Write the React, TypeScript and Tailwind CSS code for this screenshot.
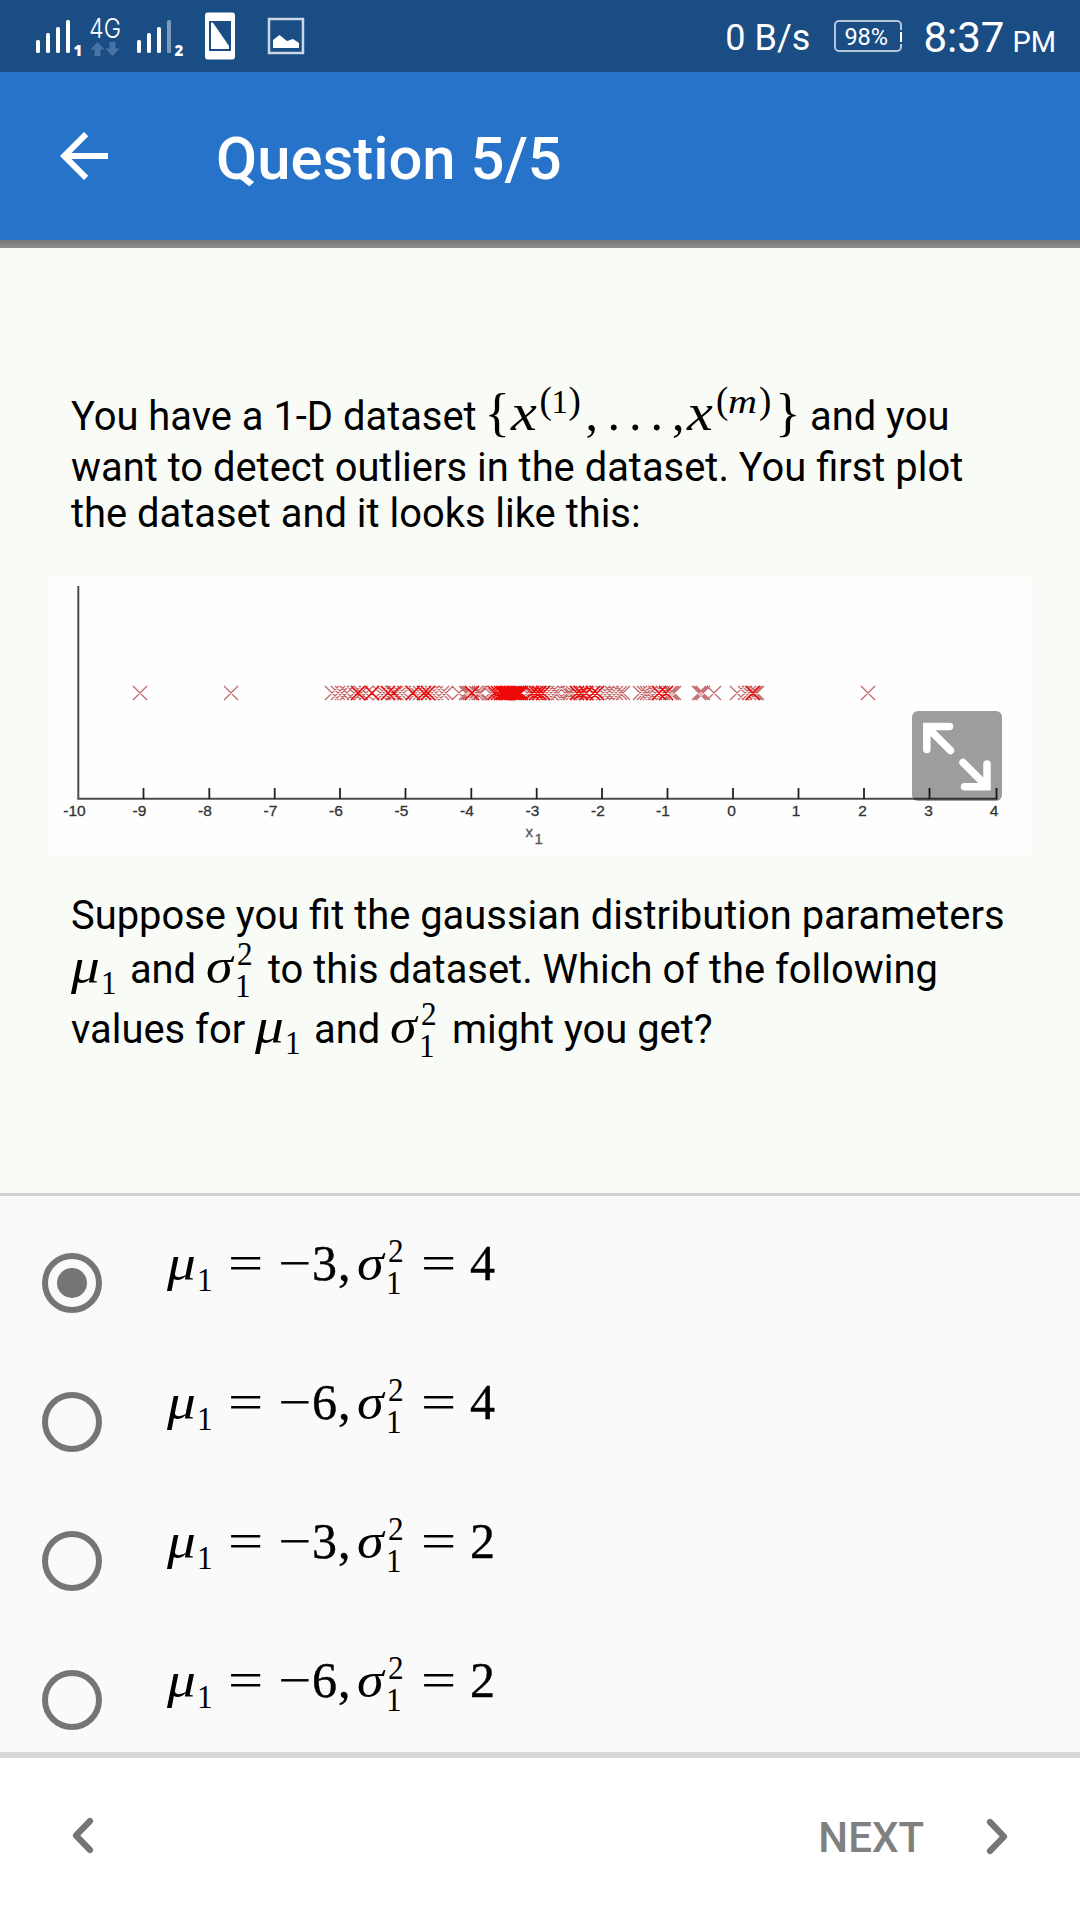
import React from "react";

type GlyphProps = { c: string; children: React.ReactNode };

/* A single math symbol in a slot of its own width; it never changes the height of its line. */
function G({ c, children }: GlyphProps) {
  return <span className={"inline-block leading-[0] whitespace-nowrap " + c}>{children}</span>;
}

function StatusBar() {
  return (
    <div className="flex h-[72px] items-center justify-between bg-[#1b4d85] text-white">
      <svg className="h-[72px] w-[320px]" viewBox="0 0 320 72" fill="#fff">
        <rect x="36" y="40" width="4" height="13" rx="1.5" />
        <rect x="46" y="33" width="4" height="20" rx="1.5" />
        <rect x="56" y="27" width="4" height="26" rx="1.5" />
        <rect x="66" y="20" width="4" height="33" rx="1.5" />
        <text x="73.5" y="56" fontFamily="Open Sans" fontWeight="800" fontSize="15">1</text>
        <text x="89" y="38" fontFamily="Inter" fontWeight="300" fontSize="27" textLength="32" lengthAdjust="spacingAndGlyphs">4G</text>
        <path d="M97.500 42 L104.500 49.500 H100.500 V56 H94.500 V49.500 H90.500Z" fill="#4774a5" />
        <path d="M112.500 56 L119.500 48.500 H115.500 V42 H109.500 V48.500 H105.500Z" fill="#4774a5" />
        <rect x="137" y="40" width="4" height="13" rx="1.5" />
        <rect x="147" y="33" width="4" height="20" rx="1.5" />
        <rect x="157" y="27" width="4" height="26" rx="1.5" />
        <rect x="167" y="20" width="4" height="33" rx="1.5" fill="#7f9bbc" />
        <text x="174.500" y="56" fontFamily="Open Sans" fontWeight="800" fontSize="15">2</text>
        <path fillRule="evenodd" d="M208 12.500h24a3 3 0 0 1 3 3v41a3 3 0 0 1-3 3h-24a3 3 0 0 1-3-3v-41a3 3 0 0 1 3-3ZM209 21v30h22V21Z" />
        <path d="M211 49V24q0-3 2.500-.5L229 46v3Z" />
        <rect x="269" y="19" width="34" height="34" fill="none" stroke="#c9d6e5" strokeWidth="2.500" />
        <path d="M273 48V40l6.500-5 7.500 6 6-2 6 4v5Z" />
      </svg>
      <div className="flex items-center pr-[24px] font-[Roboto]">
        <span className="mr-[24px] pt-[4px] text-[36px] leading-[68px]">0 B/s</span>
        <span className="relative mr-[21px] flex h-[32px] w-[68px] items-center rounded-[5px] border-2 border-[#b4c5da] pt-[3px] pl-[8px] text-[23.500px] leading-none">
          98%
          <span className="absolute -right-[2px] top-[8px] h-[14px] w-[2px] bg-[#1b4d85] py-[2px]">
            <span className="block h-[10px] w-[2px] bg-white" />
          </span>
        </span>
        <span className="flex items-baseline pt-[3px]">
          <span className="text-[42px] leading-[69px]">8:37</span>
          <span className="ml-[8px] text-[29px]">PM</span>
        </span>
      </div>
    </div>
  );
}

function AppBar() {
  return (
    <header className="flex h-[168px] items-center bg-[#2873ca] text-white">
      <svg className="ml-[48px] h-[72px] w-[72px]" viewBox="0 0 24 24" fill="#fff">
        <path d="M20 11H7.830l5.590-5.590L12 4l-8 8 8 8 1.410-1.410L7.830 13H20v-2z" />
      </svg>
      <h1 className="ml-[96px] pt-[7px] font-[Roboto] text-[59.800px] font-medium leading-none">Question 5/5</h1>
    </header>
  );
}

const light = [
  140, 231, 332, 338, 342, 347, 354, 358, 361, 366, 372, 380, 384, 388, 392, 396, 400, 404, 412, 416, 420, 424, 428, 432,
  436, 442, 446, 459, 466, 468, 470, 472, 476, 479, 481, 490, 493, 527, 530, 533, 537, 540, 543, 547, 551, 555, 558, 565,
  568, 570, 573, 577, 580, 583, 587, 593, 597, 603, 607, 612, 616, 620, 623, 640, 644, 647, 650, 655, 659, 663, 666, 670,
  672, 674, 699, 701, 703, 714, 737, 745, 749, 752, 755, 757, 868,
];
const strong = [
  358, 372, 388, 394, 413, 424, 428, 472, 495, 498, 501, 503, 505, 507, 509, 511, 513, 515, 517, 519, 521, 532, 536, 539,
  543, 577, 581, 586, 593, 597, 659, 666, 753,
];

const cross = (x: number) => `M${x - 7} 686l14 14m0-14l-14 14`;

const labels: [number, string][] = [
  [74.5, "-10"], [139.5, "-9"], [205, "-8"], [270.5, "-7"], [336, "-6"], [401.5, "-5"], [467, "-4"], [532.5, "-3"],
  [598, "-2"], [663, "-1"], [731.5, "0"], [796, "1"], [862.5, "2"], [928.5, "3"], [994, "4"],
];
const ticks = [143.5, 209.3, 274.7, 340, 405.5, 471.3, 536.7, 602, 667.5, 733, 798.5, 864, 929.5, 996.5];

function Chart() {
  return (
    <div className="relative ml-[49px] h-[278px] w-[982px] bg-[#fefefe]">
      <svg className="block h-[278px] w-[982px]" viewBox="49 577 982 278">
        <path d="M78.300 586V798.800H997.500" fill="none" stroke="#4d4d4d" strokeWidth="2" />
        {ticks.map((x) => (
          <path key={x} d={`M${x} 788v11`} stroke="#222" strokeWidth="1.800" />
        ))}
        <path d={light.map(cross).join("")} fill="none" stroke="#c4686a" strokeWidth="1.300" />
        <path d={strong.map(cross).join("")} fill="none" stroke="#ee0808" strokeWidth="1.500" />
        <g fontFamily="Liberation Sans" fontSize="15.500" fill="#333" stroke="#333" strokeWidth="0.300" textAnchor="middle">
          {labels.map(([x, t]) => (
            <text key={t} x={x} y="815.500">{t}</text>
          ))}
        </g>
        <g fontFamily="Liberation Sans" fontSize="15" fill="#555" stroke="#555" strokeWidth="0.300">
          <text x="525.500" y="837">x</text>
          <text x="534.500" y="844">1</text>
        </g>
      </svg>
      <button className="absolute left-[863px] top-[134px] h-[90px] w-[90px] rounded-[6px] bg-black/38">
        <svg className="h-[90px] w-[90px]" viewBox="912 711 90 90" fill="none" stroke="#fff" strokeWidth="7.500" strokeLinecap="round">
          <path d="M949.500 726.500H926.800V749.500M928 728L950.500 750.500M963 762.500L986 785.500M987 764V786.800H964.500" />
        </svg>
      </button>
    </div>
  );
}

function Mu1() {
  return (
    <span className="inline-block font-['Liberation_Serif'] leading-[0]">
      <G c="w-[30px] text-[50px] italic"><span className="inline-block origin-left scale-x-[1.15]">μ</span></G>
      <G c="w-[17px] align-[-11px] text-[34px]"><span className="inline-block origin-left scale-x-[0.92]">1</span></G>
    </span>
  );
}

function Sigma() {
  return (
    <span className="inline-block font-['Liberation_Serif'] leading-[0]">
      <G c="w-[29px] text-[50px] italic"><span className="inline-block origin-left scale-x-[1.08]">σ</span></G>
      <G c="w-0 align-[18px] text-[34px]"><span className="ml-[2px] inline-block origin-left scale-x-[0.92]">2</span></G>
      <G c="w-[19px] align-[-14px] text-[34px]"><span className="inline-block origin-left scale-x-[0.92]">1</span></G>
    </span>
  );
}

function X() {
  return (
    <G c="w-[29px] text-[52px] italic"><span className="inline-block origin-left scale-x-[1.12]">x</span></G>
  );
}

function Dataset() {
  return (
    <span className="inline-block font-['Liberation_Serif'] leading-[0]">
      <G c="-ml-[2px] w-[26px] text-[53px]">{"{"}</G>
      <X />
      <G c="w-[12px] align-[17px] text-[37px]">(</G>
      <G c="w-[17px] align-[17px] text-[33px]">1</G>
      <G c="w-[17px] align-[17px] text-[37px]">)</G>
      <G c="w-[22px] text-[50px]">,</G>
      <G c="w-[21.500px] text-[50px]">.</G>
      <G c="w-[21.500px] text-[50px]">.</G>
      <G c="w-[21.500px] text-[50px]">.</G>
      <G c="w-[15px] text-[50px]">,</G>
      <X />
      <G c="w-[12px] align-[17px] text-[37px]">(</G>
      <G c="w-[31px] align-[17px] text-[34px] italic"><span className="inline-block origin-left scale-x-[1.18]">m</span></G>
      <G c="w-[16px] align-[17px] text-[37px]">)</G>
      <G c="w-[25px] text-[53px]">{"}"}</G>
    </span>
  );
}

function Question() {
  return (
    <section className="h-[945px] bg-[#f9fbf6] pt-[141px] font-[Roboto] text-[39.900px] text-black">
      <div className="h-[188px] pl-[71px] whitespace-nowrap">
        <div className="h-[56px] leading-[56px]">
          You have a 1-D dataset <Dataset /> and you
        </div>
        <div className="h-[46px] leading-[46px]">want to detect outliers in the dataset. You first plot</div>
        <div className="h-[46px] leading-[46px]">the dataset and it looks like this:</div>
      </div>
      <Chart />
      <div className="pt-[37px] pl-[71px] whitespace-nowrap">
        <div className="h-[50px] leading-[48px]">Suppose you fit the gaussian distribution parameters</div>
        <div className="h-[60px] leading-[56px]">
          <Mu1 /><span className="ml-[2px]" /> and <Sigma /><span className="ml-[4px]" /> to this dataset. Which of the following
        </div>
        <div className="h-[60px] leading-[56px]">
          values for <Mu1 /><span className="ml-[2px]" /> and <Sigma /><span className="ml-[4px]" /> might you get?
        </div>
      </div>
    </section>
  );
}

function Option({ mean, variance, checked }: { mean: number; variance: number; checked?: boolean }) {
  return (
    <div className="flex h-[139px] items-center">
      <span className="ml-[42px] flex h-[60px] w-[60px] items-center justify-center rounded-full border-[6px] border-[#757575]">
        {checked && <span className="h-[30px] w-[30px] rounded-full bg-[#757575]" />}
      </span>
      <span className="ml-[65px] -mt-[46px] h-[50px] font-['Liberation_Serif'] text-[50px] leading-[56px] whitespace-nowrap text-black">
        <Mu1 />
        <G c="ml-[14px] w-[50px]"><span className="inline-block origin-left scale-x-[1.25]">=</span></G>
        <G c="w-[34px]"><span className="inline-block origin-left scale-x-[1.18]">−</span></G>
        <G c="w-[26px] [-webkit-text-stroke:0.4px]">{mean}</G>
        <G c="w-[19px] [-webkit-text-stroke:0.4px]">,</G>
        <Sigma />
        <G c="ml-[16px] w-[49px]"><span className="inline-block origin-left scale-x-[1.25]">=</span></G>
        <G c="w-[26px] [-webkit-text-stroke:0.4px]">{variance}</G>
      </span>
    </div>
  );
}

function Footer() {
  return (
    <footer className="flex h-[162px] items-center bg-white">
      <svg className="ml-[64px] -mt-[8px] h-[48px] w-[36px]" viewBox="64 1811 36 48" fill="none" stroke="#757575" strokeWidth="6.200" strokeLinecap="round" strokeLinejoin="round">
        <path d="M90 1821L76 1835.500L90 1850" />
      </svg>
      <span className="ml-auto mr-[54px] -mt-[4px] font-[Roboto] text-[42px] font-medium text-[#808080]">NEXT</span>
      <svg className="mr-[66px] -mt-[4px] h-[48px] w-[36px]" viewBox="978 1813 36 48" fill="none" stroke="#757575" strokeWidth="6.200" strokeLinecap="round" strokeLinejoin="round">
        <path d="M990 1822L1004 1836.700L990 1851" />
      </svg>
    </footer>
  );
}

export default function App() {
  return (
    <div className="flex h-[1920px] w-[1080px] flex-col overflow-hidden bg-[#fafafa]">
      <StatusBar />
      <AppBar />
      <div className="h-[8px] bg-linear-to-b from-[#777] to-[#8c8c8c]" />
      <Question />
      <div className="h-[3px] bg-[#d1d3d0]" />
      <section className="h-[556px] overflow-hidden bg-[#fafafa] pt-[17px]">
        <Option mean={3} variance={4} checked />
        <Option mean={6} variance={4} />
        <Option mean={3} variance={2} />
        <Option mean={6} variance={2} />
      </section>
      <div className="h-[6px] bg-[#d7d8d5]" />
      <Footer />
    </div>
  );
}
